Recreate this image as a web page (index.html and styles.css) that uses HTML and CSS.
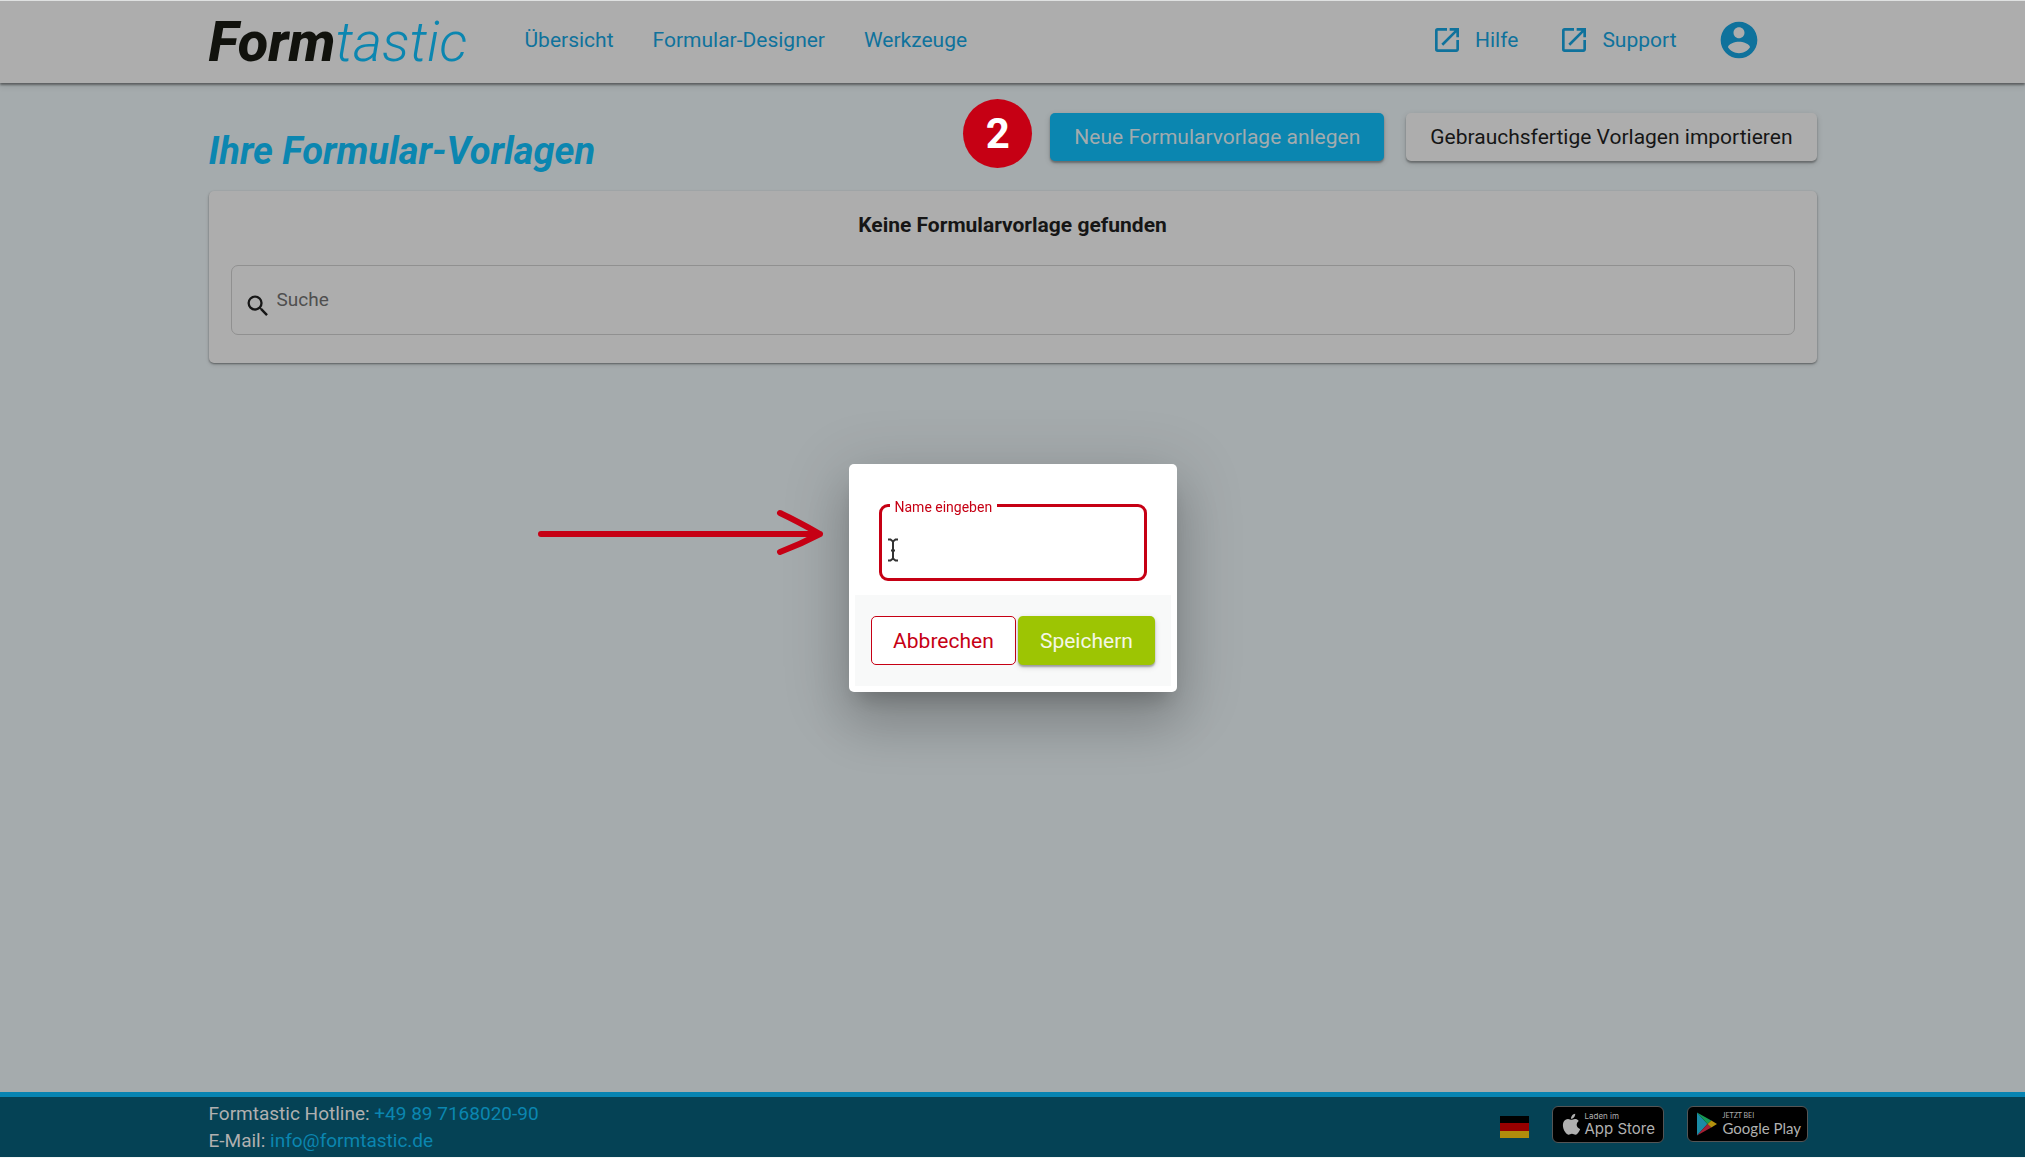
FILE: index.html
```html
<!DOCTYPE html>
<html lang="de">
<head>
<meta charset="utf-8">
<meta name="viewport" content="width=device-width, initial-scale=1">
<title>Formtastic</title>
<link rel="stylesheet" href="styles.css">
</head>
<body>
<header class="topbar">
  <div class="container topbar-inner">
    <a class="logo" href="#"><span class="logo-strong">Form</span><span class="logo-light">tastic</span></a>
    <nav class="nav">
      <a href="#">Übersicht</a>
      <a href="#">Formular-Designer</a>
      <a href="#">Werkzeuge</a>
    </nav>
    <div class="tools">
      <a class="tool" href="#"><svg class="icon" viewBox="0 0 24 24"><path d="M19 19H5V5h7V3H5a2 2 0 0 0-2 2v14a2 2 0 0 0 2 2h14c1.100 0 2-.9 2-2v-7h-2v7zM14 3v2h3.590l-9.830 9.830 1.410 1.410L19 6.410V10h2V3h-7z"/></svg>Hilfe</a>
      <a class="tool" href="#"><svg class="icon" viewBox="0 0 24 24"><path d="M19 19H5V5h7V3H5a2 2 0 0 0-2 2v14a2 2 0 0 0 2 2h14c1.100 0 2-.9 2-2v-7h-2v7zM14 3v2h3.590l-9.830 9.830 1.410 1.410L19 6.410V10h2V3h-7z"/></svg>Support</a>
      <button class="account" type="button" aria-label="Konto"><svg viewBox="0 0 24 24"><path d="M12 2C6.480 2 2 6.480 2 12s4.480 10 10 10 10-4.480 10-10S17.520 2 12 2zm0 3c1.660 0 3 1.340 3 3s-1.340 3-3 3-3-1.340-3-3 1.340-3 3-3zm0 14.200c-2.500 0-4.710-1.280-6-3.220.03-1.990 4-3.080 6-3.080 1.990 0 5.970 1.090 6 3.080-1.290 1.940-3.500 3.220-6 3.220z"/></svg></button>
    </div>
  </div>
</header>

<main class="container main">
  <div class="heading-row">
    <h1>Ihre Formular-Vorlagen</h1>
    <div class="actions">
      <span class="step">2</span>
      <button class="btn btn-primary" type="button">Neue Formularvorlage anlegen</button>
      <button class="btn btn-plain" type="button">Gebrauchsfertige Vorlagen importieren</button>
    </div>
  </div>
  <section class="card">
    <h2>Keine Formularvorlage gefunden</h2>
    <label class="search">
      <svg viewBox="0 0 24 24"><path d="M15.500 14h-.79l-.28-.27A6.470 6.470 0 0 0 16 9.500 6.500 6.500 0 1 0 9.500 16c1.610 0 3.090-.59 4.230-1.570l.27.28v.79l5 4.990L20.490 19l-4.990-5zm-6 0C7.010 14 5 11.990 5 9.500S7.010 5 9.500 5 14 7.010 14 9.500 11.990 14 9.500 14z"/></svg>
      <input type="text" placeholder="Suche" aria-label="Suche">
    </label>
  </section>
</main>

<footer class="footer">
  <div class="container footer-inner">
    <address>
      Formtastic Hotline: <a href="tel:+4989716802090">+49 89 7168020-90</a><br>
      E-Mail: <a href="mailto:info@formtastic.de">info@formtastic.de</a>
    </address>
    <div class="stores">
      <span class="flag"></span>
      <a class="store store-apple" href="#">
        <svg viewBox="0 0 17 21"><path d="M13.900 11.100c0-2 1.600-3 1.700-3.100-1-1.400-2.400-1.600-2.900-1.600-1.300-.1-2.400.7-3.100.7-.6 0-1.600-.7-2.700-.7C5.500 6.400 4.200 7.200 3.500 8.500c-1.500 2.600-.4 6.400 1.100 8.500.7 1 1.600 2.200 2.700 2.100 1.100 0 1.500-.7 2.800-.7s1.700.7 2.800.7c1.200 0 1.900-1 2.600-2.100.8-1.200 1.200-2.400 1.200-2.400s-2.800-.9-2.800-3.500zM11.800 5c.6-.7 1-1.700.9-2.700-.9 0-1.900.6-2.500 1.300-.5.600-1 1.600-.9 2.600 1 .1 1.900-.5 2.500-1.200z"/></svg>
        <span class="store-text"><small>Laden im</small><span>App Store</span></span>
      </a>
      <a class="store store-google" href="#">
        <svg viewBox="0 0 21 24"><path fill="#1a8ba6" d="M1 .6v22.800L11.500 12z"/><path fill="#179a54" d="M1 .6 11.500 12l3.800-3.500z"/><path fill="#a51f33" d="M1 23.400 11.500 12l3.800 3.500z"/><path fill="#b3910d" d="M15.300 8.500 11.500 12l3.800 3.500L21 12z"/></svg>
        <span class="store-text"><small>JETZT BEI</small><span>Google Play</span></span>
      </a>
    </div>
  </div>
</footer>

<div class="overlay">
  <form class="modal" role="dialog" aria-label="Name eingeben">
    <svg class="arrow" viewBox="0 0 290 50"><path d="M4 25H283M243 4Q260 12 283 25Q264 35 243 43"/></svg>
    <div class="modal-body">
      <fieldset class="field">
        <legend><label for="name">Name eingeben</label></legend>
        <input id="name" type="text">
        <svg class="ibeam" viewBox="0 0 12 24"><path d="M1 1.500h2.500L6 3.500l2.500-2H11M1 22.500h2.500L6 20.500l2.500 2H11M6 3.500v17M4 12.500h4"/></svg>
      </fieldset>
    </div>
    <div class="modal-actions">
      <button class="btn btn-cancel" type="button">Abbrechen</button>
      <button class="btn btn-save" type="button">Speichern</button>
    </div>
  </form>
</div>
</body>
</html>
```
FILE: styles.css
```css
* { box-sizing: border-box; }

body {
  margin: 0;
  min-height: 100vh;
  display: flex;
  flex-direction: column;
  border-top: 1px solid #dfe1e1;
  border-bottom: 1px solid #f4f6f6;
  background: #a5abad;
  color: #161616;
  font-family: Roboto, "Liberation Sans", sans-serif;
  font-size: 21px;
}

a { color: inherit; text-decoration: none; }
button, input { font: inherit; color: inherit; }
svg { display: block; fill: currentColor; }

.container {
  width: 100%;
  max-width: 1656px;
  margin: 0 auto;
  padding: 0 24px;
}

.topbar {
  background: #adadad;
  box-shadow: 0 2px 2px rgba(0, 0, 0, .4), 0 4px 6px rgba(0, 0, 0, .08);
  color: #0f729c;
}
.topbar-inner { display: flex; align-items: center; height: 82px; }
.logo { display: flex; width: 316px; font-size: 56px; line-height: 80px; font-style: italic; }
.logo-strong { color: #11120d; font-weight: 800; }
.logo-light { color: #0b86b0; font-weight: 300; }
.nav { display: flex; gap: 39px; padding-bottom: 4px; }
.tools { display: flex; align-items: center; margin-left: auto; margin-right: 56px; padding-bottom: 4px; }
.tool { display: flex; align-items: center; gap: 12px; margin-right: 40px; }
.icon { width: 32px; height: 32px; }
.account { width: 44px; height: 44px; padding: 0; border: 0; background: none; }

.main { flex: 1; }
.heading-row { display: flex; justify-content: space-between; padding-top: 30px; height: 108px; }
h1 {
  margin: 14px 0 0;
  color: #0b86b0;
  font-size: 38px;
  line-height: 48px;
  font-style: italic;
  font-weight: 700;
}
.actions { position: relative; display: flex; gap: 22px; align-items: flex-start; }
.step {
  position: absolute;
  right: calc(100% + 18px);
  top: -14px;
  width: 69px;
  height: 69px;
  border-radius: 50%;
  background: #c60014;
  color: #fff;
  font-size: 42px;
  line-height: 69px;
  font-weight: 700;
  text-align: center;
}
.btn {
  height: 48px;
  padding: 0 24px;
  border: 0;
  border-radius: 5px;
  font-size: 21px;
  font-weight: 450;
  line-height: 46px;
  white-space: nowrap;
  box-shadow: 0 2px 2px rgba(0, 0, 0, .3), 0 2px 6px rgba(0, 0, 0, .14);
}
.btn-primary { background: #0b86b0; color: #a2abae; }
.btn-plain { background: #adadad; }

.card {
  padding: 22px;
  height: 172px;
  border-radius: 5px;
  background: #adadad;
  box-shadow: 0 1px 2px rgba(0, 0, 0, .4), 0 2px 4px rgba(0, 0, 0, .1);
}
h2 { margin: 0 0 28px; font-size: 21px; line-height: 24px; font-weight: 700; text-align: center; }
.search {
  display: flex;
  align-items: center;
  height: 70px;
  padding: 0 12px;
  border: 1px solid #909090;
  border-radius: 7px;
}
.search svg { width: 28px; height: 28px; margin-top: 12px; }
.search input { flex: 1; padding: 0 0 2px 5px; border: 0; outline: 0; background: none; font-size: 19px; }
.search input::placeholder { color: #4f4f4f; opacity: 1; }

.footer { border-top: 5px solid #0784b2; background: #054255; color: #b0b0b0; }
.footer-inner { display: flex; justify-content: space-between; height: 60px; }
address { padding-top: 3px; font-style: normal; font-size: 19px; line-height: 27px; }
address a { color: #0b86b0; }
.stores { display: flex; align-items: center; margin-right: 9px; padding-bottom: 6px; }
.flag {
  width: 29px;
  height: 22px;
  margin: 6px 23px 0 0;
  background: linear-gradient(#000 0 33%, #970000 33% 66%, #b08c0c 66%);
}
.store { display: flex; align-items: center; border: 1px solid #555; border-radius: 6px; background: #000; }
.store-text { display: flex; flex-direction: column; white-space: nowrap; }
.store-apple { width: 112px; height: 37px; padding-left: 6px; margin-right: 23px; gap: 4px; font-family: Inter, sans-serif; }
.store-apple svg { width: 22px; height: 26px; }
.store-apple small { font-size: 8px; line-height: 8px; }
.store-apple span span { font-size: 15px; line-height: 17px; }
.store-google { width: 121px; height: 36px; padding-left: 8px; gap: 6px; font-family: Lato, sans-serif; }
.store-google svg { width: 21px; height: 24px; }
.store-google small { font-size: 7px; line-height: 9px; }
.store-google span span { font-size: 15px; line-height: 17px; }

.overlay {
  position: fixed;
  inset: 0;
  display: flex;
  align-items: center;
  justify-content: center;
  padding-bottom: 2px;
}
.modal {
  position: relative;
  width: 328px;
  padding: 6px;
  border-radius: 5px;
  background: #fff;
  box-shadow: 0 15px 20px -9px rgba(0, 0, 0, .2), 0 32px 51px 4px rgba(0, 0, 0, .14), 0 12px 62px 11px rgba(0, 0, 0, .12);
  color: #c60014;
}
.arrow {
  position: absolute;
  right: calc(100% + 22px);
  top: 45px;
  width: 290px;
  height: 50px;
  fill: none;
  stroke: #c60014;
  stroke-width: 6;
  stroke-linecap: round;
  stroke-linejoin: round;
}
.modal-body { padding: 24px 24px 14px; }
.field {
  position: relative;
  height: 87px;
  margin: 0;
  padding: 0 8px;
  border: 3px solid #c60014;
  border-radius: 9px;
}
.field legend { padding: 3px 5px 0; font-size: 14px; line-height: 20px; }
.field input { width: 100%; height: 48px; padding: 0; border: 0; outline: 0; background: none; }
.ibeam { position: absolute; left: 5px; top: 21px; width: 12px; height: 24px; fill: none; stroke: #333; stroke-width: 2; }
.modal-actions { display: flex; gap: 2px; padding: 21px 16px; background: #f8f9f9; }
.modal-actions .btn { flex: 1 1 auto; height: 49px; padding: 0 20px; }
.modal-actions .btn-cancel { border: 1px solid #c60014; background: #fff; box-shadow: none; }
.modal-actions .btn-save { background: #9dc503; color: #f4f7e6; }
```
